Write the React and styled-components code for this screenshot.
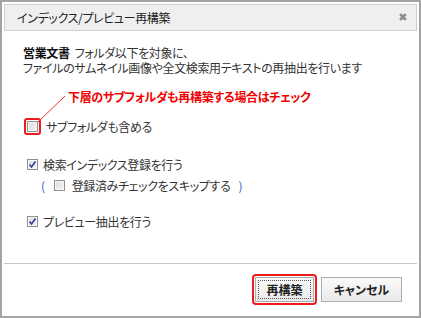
import React from 'react';
import styled, { createGlobalStyle } from 'styled-components';

const GlobalStyle = createGlobalStyle`
  html, body {
    margin: 0;
    padding: 0;
    background: #ffffff;
  }
  body {
    font-family: "Noto Sans CJK JP", "Noto Sans", sans-serif;
    font-size: 12px;
    color: #222;
    font-feature-settings: "palt";
    letter-spacing: -0.35px;
  }
`;

const Window = styled.div`
  position: relative;
  width: 421px;
  height: 318px;
  box-sizing: border-box;
  border: 2px solid #a4a4a4;
  padding: 2px;
  background: #fff;
  display: flex;
  flex-direction: column;
`;

const TitleBar = styled.div`
  height: 27px;
  box-sizing: border-box;
  background: #efefef;
  border: 1px solid #cfcfcf;
  display: flex;
  align-items: center;
  justify-content: space-between;
  padding: 0 9px 0 12px;
  font-size: 12px;
  color: #222;
`;

const CloseMark = styled.span`
  font-family: "DejaVu Sans", sans-serif;
  font-size: 11px;
  font-weight: bold;
  color: #8a8a8a;
  line-height: 1;
`;

const Body = styled.div`
  flex: 1;
  padding: 14px 0 0 19px;
  line-height: 15px;
`;

const Description = styled.p`
  margin: 0;
  color: #333;
`;

const Strong = styled.b`
  color: #111;
  margin-right: 5px;
`;

const Note = styled.div`
  margin: 15px 0 0 45px;
  color: #f00000;
  font-weight: bold;
  line-height: 14px;
`;

const Row = styled.label`
  display: flex;
  align-items: center;
  gap: 5px;
  margin-top: ${p => p.$gap || 0}px;
  margin-left: ${p => p.$indent || 4}px;
  height: 16px;
  color: #333;
`;

const Box = styled.span`
  position: relative;
  width: 11px;
  height: 11px;
  box-sizing: border-box;
  border: 1px solid #8f8f8f;
  background: linear-gradient(135deg, #dcdcdc 0%, #f4f4f4 100%);
  box-shadow: inset 0 0 0 1px #f8f8f8;
  display: inline-flex;
  align-items: center;
  justify-content: center;
  flex: none;
`;

const Highlight = styled.span`
  display: inline-flex;
  padding: 1px;
  border: 2px solid #ee1c1c;
  border-radius: 3px;
  margin-left: -3px;
`;

const Paren = styled.span`
  color: #2b59c3;
  margin: ${p => (p.$right ? '0 0 0 3px' : '0 4px 0 0')};
`;

const Footer = styled.div`
  border-top: 1px solid #c8c8c8;
  height: 50px;
  display: flex;
  align-items: center;
  justify-content: flex-end;
  gap: 4px;
  padding-right: 15px;
`;

const FocusRing = styled.span`
  display: inline-flex;
  padding: 1px;
  border: 2px solid #ee1c1c;
  border-radius: 4px;
`;

const Button = styled.button`
  height: 25px;
  width: ${p => p.$w}px;
  box-sizing: border-box;
  border: 1px solid #adadad;
  background: linear-gradient(#fafafa, #e9e9e9);
  font-family: "Noto Sans CJK JP", sans-serif;
  font-feature-settings: "palt";
  font-size: 12px;
  font-weight: bold;
  color: #222;
  padding: 0;
  outline: ${p => (p.$focus ? '1px dotted #555' : 'none')};
  outline-offset: -4px;
`;

const Pointer = styled.svg`
  position: absolute;
  left: 0;
  top: 0;
  pointer-events: none;
`;

function Check({ checked }) {
  return (
    <Box>
      {checked && (
        <svg width="9" height="9" viewBox="0 0 9 9">
          <path d="M1.5 4.5 L3.5 7 L7.5 1.5" fill="none" stroke="#2a3f9e" strokeWidth="1.6" />
        </svg>
      )}
    </Box>
  );
}

export default function App() {
  return (
    <>
      <GlobalStyle />
      <Window>
        <TitleBar>
          <span>インデックス/プレビュー再構築</span>
          <CloseMark>✖</CloseMark>
        </TitleBar>
        <Body>
          <Description>
            <Strong>営業文書</Strong>フォルダ以下を対象に、
            <br />
            ファイルのサムネイル画像や全文検索用テキストの再抽出を行います
          </Description>
          <Note>下層のサブフォルダも再構築する場合はチェック</Note>
          <Row $gap={14}>
            <Highlight>
              <Check />
            </Highlight>
            サブフォルダも含める
          </Row>
          <Row $gap={22}>
            <Check checked />
            検索インデックス登録を行う
          </Row>
          <Row $gap={5} $indent={18}>
            <Paren>(</Paren>
            <Check />
            <span style={{ marginLeft: 2 }}>登録済みチェックをスキップする</span>
            <Paren $right>)</Paren>
          </Row>
          <Row $gap={20}>
            <Check checked />
            プレビュー抽出を行う
          </Row>
        </Body>
        <Footer>
          <FocusRing>
            <Button $w={59} $focus>再構築</Button>
          </FocusRing>
          <Button $w={81}>キャンセル</Button>
        </Footer>
        <Pointer width="421" height="318">
          <line x1="63" y1="94" x2="36" y2="120" stroke="#ff2a2a" strokeWidth="1" />
        </Pointer>
      </Window>
    </>
  );
}
